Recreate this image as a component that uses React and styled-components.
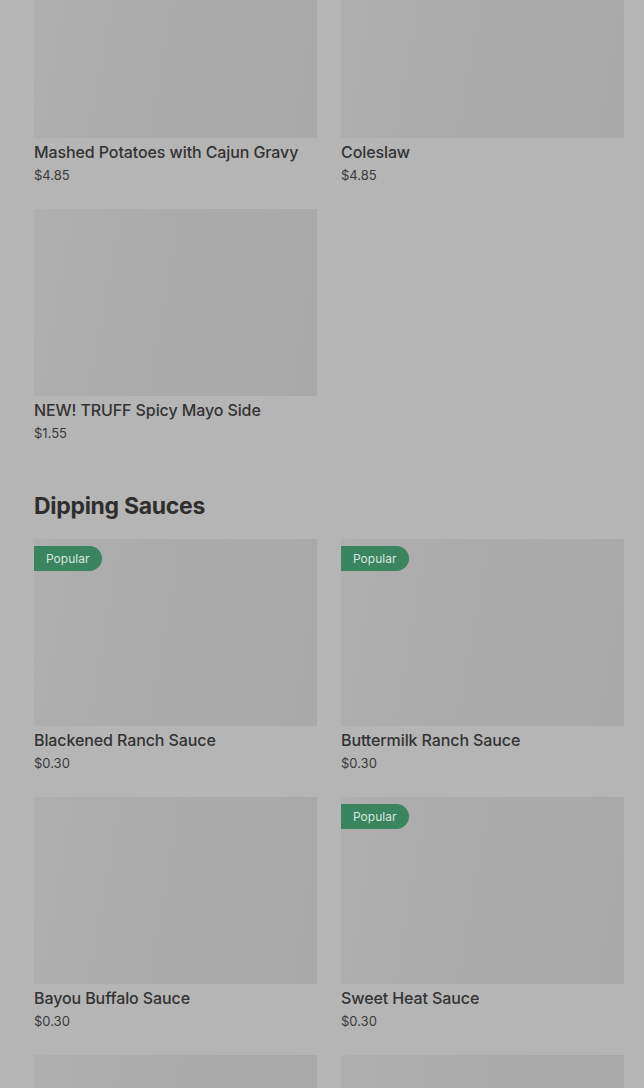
import React from "react";
import styled, { createGlobalStyle } from "styled-components";

const Global = createGlobalStyle`
  html, body { margin: 0; padding: 0; background: #b5b5b5; }
  body { font-family: Inter, "Noto Sans", sans-serif; color: #333; overflow: hidden; }
`;

const Page = styled.div`
  width: 644px;
  height: 1088px;
  overflow: hidden;
  background: #b5b5b5;
`;

const Content = styled.div`
  margin-top: -49px;
  padding: 0 20px 0 34px;
`;

const Grid = styled.div`
  display: grid;
  grid-template-columns: 283px 283px;
  column-gap: 24px;
  row-gap: 24px;
`;

const Card = styled.div`
  display: flex;
  flex-direction: column;
`;

const Thumb = styled.div`
  position: relative;
  height: 187px;
  background: linear-gradient(100deg, #afafaf 0%, #ababab 40%, #a9a9a9 100%);
`;

const Badge = styled.span`
  position: absolute;
  top: 7px;
  left: 0;
  height: 25px;
  padding: 0 13px 0 12px;
  display: flex;
  align-items: center;
  background: #3a8460;
  color: #d6e8de;
  font-size: 12px;
  border-radius: 0 13px 13px 0;
`;

const Title = styled.div`
  margin-top: 4px;
  font-size: 16px;
  line-height: 20px;
  font-weight: 500;
  color: #333;
  letter-spacing: -0.1px;
`;

const Price = styled.div`
  margin-top: 3px;
  font-size: 13px;
  line-height: 20px;
  color: #3a3a3a;
`;

const Heading = styled.h2`
  margin: 47px 0 17px;
  font-size: 23px;
  line-height: 32px;
  font-weight: 700;
  color: #2e2e2e;
  letter-spacing: -0.3px;
`;

const sides = [
  { name: "Mashed Potatoes with Cajun Gravy", price: "$4.85" },
  { name: "Coleslaw", price: "$4.85" },
  { name: "NEW! TRUFF Spicy Mayo Side", price: "$1.55" },
];

const sauces = [
  { name: "Blackened Ranch Sauce", price: "$0.30", popular: true },
  { name: "Buttermilk Ranch Sauce", price: "$0.30", popular: true },
  { name: "Bayou Buffalo Sauce", price: "$0.30" },
  { name: "Sweet Heat Sauce", price: "$0.30", popular: true },
  { name: "Honey Mustard Sauce", price: "$0.30" },
  { name: "Cajun Sauce", price: "$0.30" },
];

function Item({ item }) {
  return (
    <Card>
      <Thumb>{item.popular && <Badge>Popular</Badge>}</Thumb>
      <Title>{item.name}</Title>
      <Price>{item.price}</Price>
    </Card>
  );
}

export default function App() {
  return (
    <Page>
      <Global />
      <Content>
        <Grid>
          {sides.map((s) => (
            <Item key={s.name} item={s} />
          ))}
        </Grid>
        <Heading>Dipping Sauces</Heading>
        <Grid>
          {sauces.map((s) => (
            <Item key={s.name} item={s} />
          ))}
        </Grid>
      </Content>
    </Page>
  );
}
